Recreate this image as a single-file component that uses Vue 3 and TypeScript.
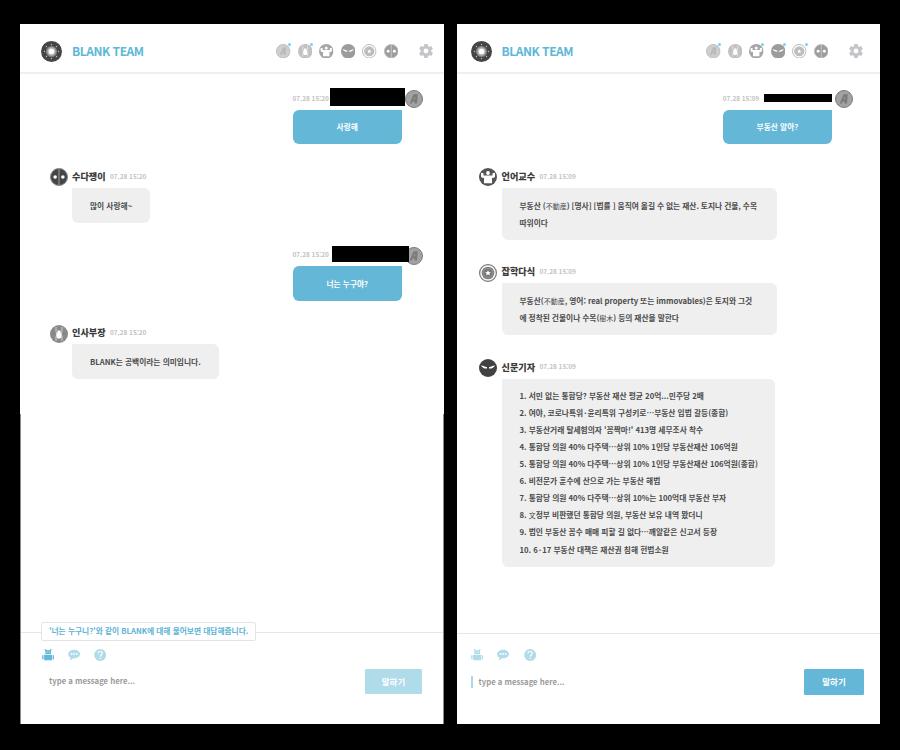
<script setup lang="ts">
type Role = 'ant' | 'user' | 'strong' | 'ninja' | 'shield' | 'eyes'

interface Message {
  from: 'me' | 'bot'
  time: string
  lines: string[]
  name?: string
  icon: Role
  mask?: 'tall' | 'wide' | 'slim'
  size?: 'list' | 'article'
}

interface Panel {
  id: string
  active: Role[]
  messages: Message[]
  hint?: string
}

const team: Role[] = ['user', 'ant', 'strong', 'ninja', 'shield', 'eyes']

const panels: Panel[] = [
  {
    id: 'left',
    active: ['user', 'ant'],
    hint: "'너는 누구니?'와 같이 BLANK에 대해 물어보면 대답해줍니다.",
    messages: [
      { from: 'me', time: '07.28 15:20', lines: ['사랑해'], icon: 'user', mask: 'tall' },
      { from: 'bot', name: '수다쟁이', time: '07.28 15:20', lines: ['많이 사랑해~'], icon: 'eyes' },
      { from: 'me', time: '07.28 15:20', lines: ['너는 누구야?'], icon: 'user', mask: 'wide' },
      { from: 'bot', name: '인사부장', time: '07.28 15:20', lines: ['BLANK는 공백이라는 의미입니다.'], icon: 'ant' },
    ],
  },
  {
    id: 'right',
    active: ['user', 'strong', 'ninja', 'shield'],
    messages: [
      { from: 'me', time: '07.28 15:09', lines: ['부동산 알아?'], icon: 'user', mask: 'slim' },
      {
        from: 'bot', name: '언어교수', time: '07.28 15:09', icon: 'strong', size: 'article',
        lines: ['부동산 (不動産) [명사] [법률 ] 움직여 옮길 수 없는 재산. 토지나 건물, 수목', '따위이다'],
      },
      {
        from: 'bot', name: '잡학다식', time: '07.28 15:09', icon: 'shield', size: 'article',
        lines: ['부동산(不動産, 영어: real property 또는 immovables)은 토지와 그것', '에 정착된 건물이나 수목(樹木) 등의 재산을 말한다'],
      },
      {
        from: 'bot', name: '신문기자', time: '07.28 15:09', icon: 'ninja', size: 'list',
        lines: [
          '1. 서민 없는 통합당? 부동산 재산 평균 20억...민주당 2배',
          '2. 여야, 코로나특위·윤리특위 구성키로⋯부동산 입법 갈등(종합)',
          "3. 부동산거래 탈세혐의자 '꼼짝마!' 413명 세무조사 착수",
          '4. 통합당 의원 40% 다주택⋯상위 10% 1인당 부동산재산 106억원',
          '5. 통합당 의원 40% 다주택⋯상위 10% 1인당 부동산재산 106억원(종합)',
          '6. 비전문가 훈수에 산으로 가는 부동산 해법',
          '7. 통합당 의원 40% 다주택⋯상위 10%는 100억대 부동산 부자',
          '8. 文정부 비판했던 통합당 의원, 부동산 보유 내역 봤더니',
          '9. 법인 부동산 꼼수 매매 피할 길 없다⋯깨알같은 신고서 등장',
          '10. 6·17 부동산 대책은 재산권 침해 헌법소원',
        ],
      },
    ],
  },
]

/* Splits a line so that hanja runs get a lighter face and middle dots get room. */
const segments = (line: string) =>
  line
    .split(/([\u4e00-\u9fff]+|·)/)
    .filter((s) => s.length > 0)
    .map((text) => ({ text, hanja: /[\u4e00-\u9fff]/.test(text), dot: text === '·' }))
</script>

<template>
  <div class="stage" lang="ko">
    <svg class="defs" aria-hidden="true">
      <symbol id="i-logo" viewBox="0 0 42 42">
        <circle cx="21" cy="21" r="21" fill="#454545" />
        <circle cx="21" cy="21" r="11" fill="#858585" />
        <circle cx="21" cy="21" r="8.3" fill="#b5b5b5" />
        <circle cx="21" cy="21" r="5.6" fill="#fff" />
        <g fill="#bdbdbd">
          <circle cx="21" cy="7" r="1.300" /><circle cx="31" cy="11" r="1.300" />
          <circle cx="35" cy="21" r="1.300" /><circle cx="31" cy="31" r="1.300" />
          <circle cx="21" cy="35" r="1.300" /><circle cx="11" cy="31" r="1.300" />
          <circle cx="7" cy="21" r="1.300" /><circle cx="11" cy="11" r="1.300" />
        </g>
      </symbol>
      <symbol id="i-user" viewBox="0 0 36 36">
        <circle cx="18" cy="18" r="17" fill="#a2a2a2" stroke="#7c7c7c" stroke-width="2" />
        <path d="M9.500 27 17 8.500h8.500L24 27h-5l.3-4h-4L13.800 27zM17 18.700h2.800l.7-5.500z" fill="#7b7b7b" fill-rule="evenodd" />
      </symbol>
      <symbol id="i-ant" viewBox="0 0 36 36">
        <circle cx="18" cy="18" r="18" fill="#8a8a8a" />
        <path d="M12 4v9l2 5-2 5v9M24 4v9l-2 5 2 5v9" fill="none" stroke="#d2d2d2" stroke-width="2" />
        <path d="M15 11h6v3.500l2 3.500v6l-2 3h-6l-2-3v-6l2-3.500z" fill="#fff" />
      </symbol>
      <symbol id="i-strong" viewBox="0 0 36 36">
        <circle cx="18" cy="18" r="18" fill="#555" />
        <path d="M4 10h5v5h18v-5h5v6.500c0 2-2 3.500-5 3.500h-1v10.500H10V20H9c-3 0-5-1.500-5-3.500z" fill="#fff" />
        <circle cx="18" cy="10" r="3.800" fill="#fff" />
      </symbol>
      <symbol id="i-ninja" viewBox="0 0 36 36">
        <circle cx="18" cy="18" r="18" fill="#424242" />
        <path d="M4 12.500 16 16.500v2.500c-5 .8-9.500-1.300-12-6.500zM32 12.500 20 16.500v2.500c5 .8 9.500-1.300 12-6.500z" fill="#fff" />
      </symbol>
      <symbol id="i-shield" viewBox="0 0 36 36">
        <circle cx="18" cy="18" r="16.800" fill="#fff" stroke="#777" stroke-width="2.400" />
        <circle cx="18" cy="18" r="12.700" fill="#777" />
        <circle cx="18" cy="18" r="9.700" fill="none" stroke="#a5a5a5" stroke-width="1.500" />
        <path d="m18 12.500 1.700 3.600 3.900.5-2.900 2.700.8 3.900-3.500-2-3.500 2 .8-3.900-2.900-2.700 3.900-.5z" fill="#fff" />
      </symbol>
      <symbol id="i-eyes" viewBox="0 0 36 36">
        <circle cx="18" cy="18" r="17" fill="#454545" stroke="#858585" stroke-width="2" />
        <path d="M18 1v34" stroke="#a2a2a2" stroke-width="2" />
        <circle cx="10.300" cy="18" r="3.600" fill="#fff" />
        <circle cx="25.700" cy="18" r="3.600" fill="#fff" />
      </symbol>
      <symbol id="i-gear" viewBox="2 2 20 20">
        <path fill="currentColor" d="M19.430 12.980c.04-.32.07-.64.07-.98s-.03-.66-.07-.98l2.110-1.650c.19-.15.24-.42.12-.64l-2-3.460c-.12-.22-.39-.3-.61-.22l-2.490 1c-.52-.4-1.080-.73-1.690-.98l-.38-2.650A.488.488 0 0 0 14 2h-4c-.25 0-.46.18-.49.42l-.38 2.650c-.61.25-1.170.59-1.690.98l-2.490-1c-.23-.09-.49 0-.61.22l-2 3.460c-.13.22-.07.49.12.64l2.110 1.650c-.04.32-.07.65-.07.98s.03.66.07.98l-2.110 1.650c-.19.15-.24.42-.12.64l2 3.460c.12.22.39.3.61.22l2.490-1c.52.4 1.080.73 1.690.98l.38 2.650c.03.24.24.42.49.42h4c.25 0 .46-.18.49-.42l.38-2.650c.61-.25 1.170-.59 1.690-.98l2.490 1c.23.09.49 0 .61-.22l2-3.460c.12-.22.07-.49-.12-.64zM12 15.500a3.500 3.500 0 1 1 0-7 3.500 3.500 0 0 1 0 7z" />
      </symbol>
      <symbol id="i-robot" viewBox="0 0 36 36">
        <path fill="currentColor" d="M8 1h3.500l2.500 2.500h8L24.500 1H28v3l-1.500 2v9h-17V6L8 4zM6 17h24v15a2 2 0 0 1-2 2H8a2 2 0 0 1-2-2zM0 19h4v12H0zM32 19h4v12h-4z" />
        <path fill="#fff" d="M13 8h3.500v2.500H13zM19.500 8H23v2.500h-3.500z" />
      </symbol>
      <symbol id="i-talk" viewBox="0 0 36 36">
        <path fill="currentColor" d="M18 2c9.700 0 17.800 5.800 17.800 13S27.700 28 18 28c-1.300 0-2.500-.1-3.700-.3C11.800 30.500 8.500 33 4.500 34c1.900-2.700 2.500-5.400 2.400-8.400C3 23.300.2 19.600.2 15.500.2 8.300 8.300 2 18 2z" />
        <g fill="#fff"><circle cx="10.500" cy="15" r="2.700" /><circle cx="18" cy="15" r="2.700" /><circle cx="25.500" cy="15" r="2.700" /></g>
      </symbol>
      <symbol id="i-help" viewBox="0 0 36 36">
        <circle cx="18" cy="18" r="17.800" fill="currentColor" />
        <path d="M11.800 13.500c0-3.800 2.700-6 6.200-6s6.200 2.200 6.200 5.500c0 5-6 5.200-6 10.200" fill="none" stroke="#fff" stroke-width="3.300" />
        <circle cx="18.200" cy="28" r="2.300" fill="#fff" />
      </symbol>
    </svg>

    <section v-for="panel in panels" :key="panel.id" class="panel" :class="panel.id">
      <header class="top">
        <svg class="logo"><use href="#i-logo" /></svg>
        <h1>BLANK TEAM</h1>
        <div class="team">
          <span v-for="role in team" :key="role" class="member" :class="{ on: panel.active.includes(role) }">
            <svg><use :href="`#i-${role}`" /></svg>
          </span>
        </div>
        <svg class="gear"><use href="#i-gear" /></svg>
      </header>

      <main class="chat">
        <article v-for="(m, i) in panel.messages" :key="i" class="msg" :class="m.from">
          <svg class="avatar"><use :href="`#i-${m.icon}`" /></svg>
          <div class="content">
            <div class="meta">
              <b v-if="m.name">{{ m.name }}</b>
              <time>{{ m.time }}</time>
              <i v-if="m.mask" class="mask" :class="m.mask"></i>
            </div>
            <div class="bubble" :class="m.size">
              <p v-for="(line, n) in m.lines" :key="n"><span v-for="(s, k) in segments(line)" :key="k" :class="{ hanja: s.hanja, dot: s.dot }">{{ s.text }}</span></p>
            </div>
          </div>
        </article>
      </main>

      <footer class="composer">
        <div v-if="panel.hint" class="hint">{{ panel.hint }}</div>
        <div class="tools">
          <svg :class="{ current: panel.hint }"><use href="#i-robot" /></svg>
          <svg><use href="#i-talk" /></svg>
          <svg><use href="#i-help" /></svg>
        </div>
        <div class="entry">
          <span class="placeholder">type a message here...</span>
          <button type="button">말하기</button>
        </div>
      </footer>
    </section>
  </div>
</template>

<style>
body {
  margin: 0;
  background: #000;
}
</style>

<style scoped>
.stage {
  box-sizing: border-box;
  width: 900px;
  height: 750px;
  padding: 24px 20px 26px;
  display: flex;
  justify-content: space-between;
  background: #000;
  font-family: "Noto Sans CJK KR", "Noto Sans", sans-serif;
  font-weight: 700;
  overflow: hidden;
}
.defs {
  position: absolute;
  width: 0;
  height: 0;
}
svg {
  display: block;
  flex: none;
}
.panel {
  position: relative;
  display: flex;
  flex-direction: column;
  height: 700px;
  background: #fff;
}
.panel.left {
  --start: 0px;
  width: 424px;
}
.panel.right {
  --start: -7.500px;
  width: 423px;
}
.panel.left::after {
  content: "";
  position: absolute;
  inset: 390px 0 0;
  border: solid #8b8b8b;
  border-width: 0 1px;
  pointer-events: none;
}
.top {
  box-sizing: border-box;
  height: 50px;
  padding: 5px 0 0 calc(21px + var(--start));
  display: flex;
  align-items: center;
  border-bottom: 2px solid #efefef;
}
.logo {
  width: 21px;
  height: 21px;
  margin-top: 1px;
}
h1 {
  flex: none;
  margin: 0 0 0 10px;
  width: 204px;
  font-size: 12px;
  line-height: 18px;
  letter-spacing: -0.450px;
  color: #5eb7d7;
}
.right h1 {
  width: 204.500px;
}
.team {
  display: flex;
  gap: 7.100px;
  margin-top: 1px;
}
.member {
  position: relative;
}
.member svg {
  width: 14.500px;
  height: 14.500px;
  opacity: 0.52;
}
.member.on::after {
  content: "";
  position: absolute;
  top: -0.500px;
  right: -0.800px;
  width: 3px;
  height: 3px;
  border-radius: 50%;
  background: #68d9f4;
}
.gear {
  width: 14px;
  height: 14px;
  margin: 1px 0 0 20.300px;
  color: #c3c5c8;
}
.chat {
  flex: 1;
  display: flex;
  flex-direction: column;
  gap: 23.700px;
  padding: 16px 0 0 calc(29.500px + var(--start));
}
.msg {
  display: flex;
  align-items: flex-start;
  gap: 4.500px;
}
.msg.me {
  flex-direction: row-reverse;
  justify-content: flex-end;
  padding-left: 243px;
  gap: 3px;
}
.right .msg.me {
  padding-left: 243.700px;
}
.avatar {
  width: 18px;
  height: 18px;
  margin-top: 0.300px;
}
.meta {
  display: flex;
  align-items: center;
  height: 16px;
  margin-bottom: 4px;
  white-space: nowrap;
}
.meta b {
  width: 38px;
  font-size: 9.150px;
  color: #3c3c3c;
}
time {
  font-size: 6.450px;
  color: #c3c3c3;
}
.me .content {
  width: 109.500px;
}
.me .meta {
  position: relative;
}
.mask {
  position: absolute;
  background: #000;
}
.mask.tall {
  left: 37.500px;
  top: -2.500px;
  width: 74.500px;
  height: 18.500px;
}
.mask.wide {
  left: 39.500px;
  top: 0;
  width: 77px;
  height: 15.500px;
}
.mask.slim {
  left: 41.500px;
  top: 3.500px;
  width: 68px;
  height: 8px;
}
.bubble {
  box-sizing: border-box;
  width: fit-content;
  padding: 8.400px 18px 9px;
  border-radius: 0 6px 6px 6px;
  background: #efefef;
  color: #4b4b4b;
  font-size: 7.720px;
}
.me .bubble {
  width: 109.500px;
  border-radius: 6px 0 6px 6px;
  background: #64b7d6;
  color: #fff;
  text-align: center;
}
.bubble.article {
  width: 275px;
  word-spacing: -0.200px;
}
.bubble.list {
  width: 273.500px;
}
.bubble p {
  margin: 0;
  height: 17.070px;
  line-height: 17.070px;
  white-space: nowrap;
}
.hanja {
  font-family: "Noto Sans CJK JP", sans-serif;
  font-size: 7px;
  font-weight: 400;
}
.dot {
  padding: 0 0.900px;
}
.composer {
  position: relative;
  box-sizing: border-box;
  height: 92px;
  border-top: 1px solid #e6e6e6;
  padding: 16px 0 0 calc(21.500px + var(--start));
}
.right .composer {
  height: 91px;
  padding-top: 15px;
}
.hint {
  position: absolute;
  left: 21px;
  top: -11px;
  box-sizing: border-box;
  width: 215px;
  height: 18.500px;
  padding-left: 7px;
  border: 1px solid #e4e4e4;
  border-radius: 2px;
  background: #fff;
  font-size: 7.720px;
  line-height: 15px;
  white-space: nowrap;
  color: #5bb3d4;
}
.tools {
  display: flex;
  gap: 14px;
  color: #b0dbe9;
}
.tools svg {
  width: 12.300px;
  height: 12px;
}
.tools .current {
  color: #64b7d6;
}
.entry {
  display: flex;
  align-items: center;
  justify-content: space-between;
  margin-top: 8px;
  padding: 0 22px 0 7.500px;
}
.right .entry {
  padding: 0 16px 0 0;
}
.placeholder {
  font-size: 7.720px;
  line-height: 12px;
  margin-bottom: 2px;
  color: #9b9b9b;
}
.right .placeholder {
  margin-bottom: 1px;
  padding-left: 5.500px;
  border-left: 2px solid #a9d8e8;
}
button {
  width: 57px;
  height: 25px;
  padding: 0 0 2px;
  border: 0;
  border-radius: 1.500px;
  background: #b0dbe9;
  color: #fff;
  font: inherit;
  font-size: 8.500px;
}
.right button {
  width: 60px;
  height: 26px;
  background: #64b7d6;
}
</style>
